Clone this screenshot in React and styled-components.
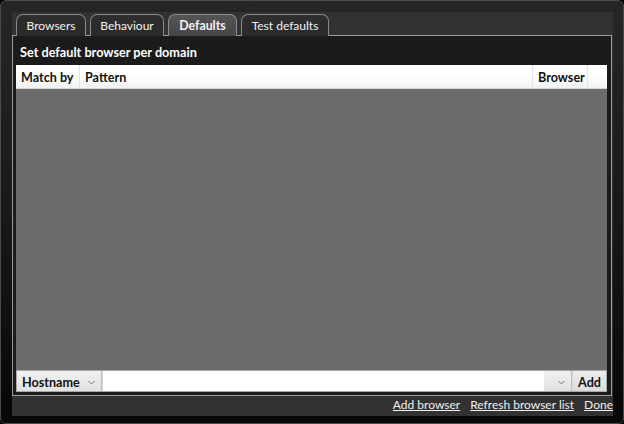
import React from "react";
import styled, { createGlobalStyle } from "styled-components";

const Global = createGlobalStyle`
  html, body { margin: 0; padding: 0; background: #000; }
  body { font-family: Lato, "Noto Sans", sans-serif; font-size: 12px; }
  * { box-sizing: border-box; }
`;

const Win = styled.div`
  width: 624px;
  height: 424px;
  border: 1px solid #4a4a4a;
  border-radius: 6px;
  background: linear-gradient(#262626, #1c1c1c 40%, #070707);
  padding: 11px 10px 7px 11px;
  display: flex;
`;

const Panel = styled.div`
  flex: 1;
  background: #323232;
  display: flex;
  flex-direction: column;
`;

const TabStrip = styled.div`
  display: flex;
  gap: 4px;
  padding: 2px 0 0 4px;
  height: 24px;
  position: relative;
  z-index: 1;
  margin-bottom: -1px;
`;

const Tab = styled.div`
  height: 22px;
  border: 1px solid #8a8a8a;
  border-bottom: none;
  border-radius: 7px 7px 0 0;
  background: ${(p) =>
    p.$active
      ? "linear-gradient(#555, #454545)"
      : "linear-gradient(#2e2e2e, #2a2a2a)"};
  color: #f2f2f2;
  font-weight: ${(p) => (p.$active ? 700 : 400)};
  font-size: ${(p) => (p.$active ? "12.3px" : "12px")};
  display: flex;
  align-items: center;
  justify-content: center;
  width: ${(p) => p.$w}px;
  padding-bottom: 1px;
`;

const Content = styled.div`
  flex: 1;
  margin-right: 1px;
  border: 1px solid #9c9c9c;
  background: #1b1b1b;
  display: flex;
  flex-direction: column;
  padding: 0 3px 3px 3px;
`;

const Title = styled.div`
  height: 29px;
  display: flex;
  align-items: center;
  padding-left: 4px;
  padding-top: 3px;
  color: #fff;
  font-weight: 700;
  font-size: 12.7px;
`;

const Grid = styled.div`
  flex: 1;
  display: flex;
  flex-direction: column;
  margin-right: 1px;
`;

const Header = styled.div`
  height: 24px;
  display: flex;
  background: linear-gradient(#ffffff 50%, #f1f2f4);
  border-bottom: 1px solid #d5d5d5;
`;

const HeadCell = styled.div`
  width: ${(p) => (p.$w ? `${p.$w}px` : "auto")};
  flex: ${(p) => (p.$w ? "none" : 1)};
  border-right: ${(p) => (p.$last ? "none" : "1px solid #e4e4e4")};
  color: #111;
  font-weight: 700;
  font-size: 12.6px;
  display: flex;
  align-items: center;
  padding-left: 5px;
  padding-top: 2px;
`;

const Body = styled.div`
  flex: 1;
  background: #6b6b6b;
`;

const Bottom = styled.div`
  height: 22px;
  display: flex;
  border: 1px solid #a8a8a8;
  background: #d8d8d8;
`;

const Combo = styled.div`
  width: ${(p) => p.$w}px;
  display: flex;
  align-items: center;
  justify-content: space-between;
  background: linear-gradient(#f0f0f0, #e2e2e2);
  border-right: 1px solid #bdbdbd;
  padding: 2px 6px 0 5px;
  color: #111;
  font-weight: 700;
  font-size: 12.6px;
`;

const Input = styled.div`
  flex: 1;
  background: #fff;
  margin-left: 1px;
`;

const Chevron = () => (
  <svg width="7" height="5" viewBox="0 0 7 5">
    <path d="M0.5 1 L3.5 4 L6.5 1" fill="none" stroke="#777" strokeWidth="1" />
  </svg>
);

const AddBtn = styled.div`
  width: 33px;
  margin-left: 1px;
  display: flex;
  align-items: center;
  justify-content: center;
  background: linear-gradient(#ececec, #dcdcdc);
  color: #111;
  font-weight: 700;
  font-size: 12.6px;
  padding-top: 2px;
`;

const Links = styled.div`
  height: 20px;
  display: flex;
  justify-content: flex-end;
  align-items: center;
  gap: 10px;
  padding-bottom: 3px;
`;

const Link = styled.a`
  color: #f0f0f0;
  text-decoration: underline;
  cursor: pointer;
`;

export default function App() {
  return (
    <>
      <Global />
      <Win>
        <Panel>
          <TabStrip>
            <Tab $w={70}>Browsers</Tab>
            <Tab $w={74}>Behaviour</Tab>
            <Tab $w={69} $active>Defaults</Tab>
            <Tab $w={88}>Test defaults</Tab>
          </TabStrip>
          <Content>
            <Title>Set default browser per domain</Title>
            <Grid>
              <Header>
                <HeadCell $w={64}>Match by</HeadCell>
                <HeadCell>Pattern</HeadCell>
                <HeadCell $w={55}>Browser</HeadCell>
                <HeadCell $w={19} $last />
              </Header>
              <Body />
              <Bottom>
                <Combo $w={85}>
                  Hostname <Chevron />
                </Combo>
                <Input />
                <Combo $w={28}>
                  <span />
                  <Chevron />
                </Combo>
                <AddBtn>Add</AddBtn>
              </Bottom>
            </Grid>
          </Content>
          <Links>
            <Link>Add browser</Link>
            <Link>Refresh browser list</Link>
            <Link>Done</Link>
          </Links>
        </Panel>
      </Win>
    </>
  );
}
